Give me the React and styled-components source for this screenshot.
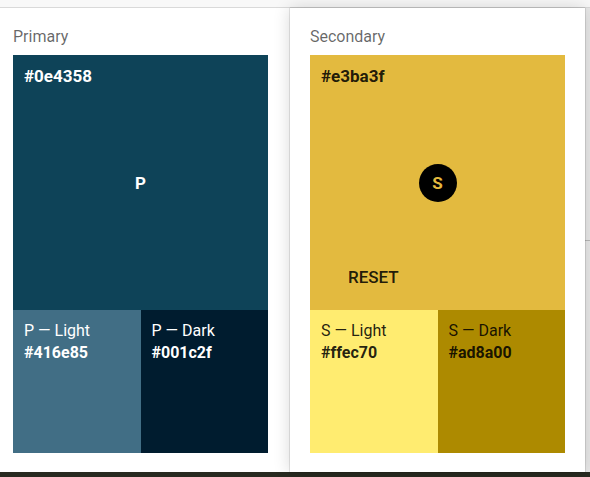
import React from 'react';
import styled, { createGlobalStyle } from 'styled-components';

const GlobalStyle = createGlobalStyle`
    html, body {
        margin: 0;
        padding: 0;
        background: #f5f5f5;
        font-family: Roboto, "Liberation Sans", sans-serif;
        overflow: hidden;
    }
    #root {
        height: 477px;
    }
`;

const Page = styled.main`
    display: flex;
    flex-direction: column;
    height: 477px;
    width: 590px;
    overflow: hidden;
`;

const TopStrip = styled.div`
    height: 7px;
    background: #f8f8f8;
    border-bottom: 1px solid #d9d9d9;
    flex-shrink: 0;
`;

const CardRow = styled.section`
    display: flex;
    flex: 1;
    min-height: 0;
`;

const Card = styled.article`
    position: relative;
    flex-shrink: 0;
    width: ${p => p.$width}px;
    margin-left: ${p => p.$offset || 0}px;
    padding: 17px 20px 0;
    box-sizing: border-box;
    background: white;
    z-index: ${p => (p.$raised ? 2 : 1)};
    box-shadow: ${p => p.$raised
        ? '0 0 1px rgba(0,0,0,.55), 0 0 16px rgba(0,0,0,.16)'
        : 'none'};
`;

const Gap = styled.div`
    width: 2px;
    flex-shrink: 0;
    background: white;
`;

const Peek = styled.div`
    flex: 1;
    background: #e9e9e9;
    padding-top: 232px;
    .edge {
        height: 1px;
        background: #b8b8b8;
    }
`;

const Label = styled.h2`
    margin: 0 0 7px;
    font-size: 16px;
    font-weight: 400;
    line-height: 23px;
    color: rgba(0, 0, 0, 0.6);
`;

const Palette = styled.div`
    width: 255px;
    display: flex;
    flex-direction: column;
`;

const Main = styled.div`
    display: grid;
    height: 255px;
    background: ${p => p.$bg};
    color: ${p => p.$fg};
    > * {
        grid-area: 1 / 1;
    }
`;

const Hex = styled.span`
    align-self: start;
    justify-self: start;
    padding: 10px 11px;
    font-size: 17px;
    font-weight: 700;
    line-height: 22px;
`;

const Letter = styled.span`
    align-self: center;
    justify-self: center;
    font-size: 17px;
    font-weight: 700;
    line-height: 20px;
`;

const Badge = styled.span`
    align-self: center;
    justify-self: center;
    display: flex;
    align-items: center;
    justify-content: center;
    width: 38px;
    height: 38px;
    border-radius: 50%;
    background: #000;
    color: ${p => p.$fg};
    font-size: 17px;
    font-weight: 700;
`;

const ResetButton = styled.button`
    align-self: end;
    justify-self: start;
    margin: 0 0 22px 27px;
    padding: 0 11px;
    border: 0;
    background: transparent;
    color: rgba(0, 0, 0, 0.87);
    font-family: inherit;
    font-size: 17px;
    font-weight: 500;
    line-height: 22px;
    text-transform: uppercase;
    cursor: pointer;
`;

const Variants = styled.div`
    display: flex;
    height: 143px;
`;

const Variant = styled.div`
    flex: 1;
    padding: 10px 11px;
    background: ${p => p.$bg};
    color: ${p => p.$fg};
    font-size: 16px;
    line-height: 22px;
    .name {
        display: block;
    }
    .hex {
        display: block;
        font-weight: 700;
    }
`;

const BottomBar = styled.div`
    height: 5px;
    flex-shrink: 0;
    background: #282a20;
`;

const SwatchCard = ({ title, main, light, dark, fg, initial, raised, width, offset }) => (
    <Card $raised={raised} $width={width} $offset={offset}>
        <Label>{title}</Label>
        <Palette>
            <Main $bg={main} $fg={fg}>
                <Hex>{main}</Hex>
                {raised ? (
                    <>
                        <Badge $fg={main}>{initial}</Badge>
                        <ResetButton>Reset</ResetButton>
                    </>
                ) : (
                    <Letter>{initial}</Letter>
                )}
            </Main>
            <Variants>
                <Variant $bg={light} $fg={fg}>
                    <span className="name">{initial} — Light</span>
                    <span className="hex">{light}</span>
                </Variant>
                <Variant $bg={dark} $fg={fg}>
                    <span className="name">{initial} — Dark</span>
                    <span className="hex">{dark}</span>
                </Variant>
            </Variants>
        </Palette>
    </Card>
);

const App = () => (
    <Page>
        <GlobalStyle />
        <TopStrip />
        <CardRow>
            <SwatchCard
                title="Primary"
                main="#0e4358"
                light="#416e85"
                dark="#001c2f"
                fg="#fff"
                initial="P"
                width={295}
                offset={-7}
            />
            <Gap />
            <SwatchCard
                title="Secondary"
                main="#e3ba3f"
                light="#ffec70"
                dark="#ad8a00"
                fg="rgba(0,0,0,.87)"
                initial="S"
                width={295}
                raised
            />
            <Peek>
                <div className="edge" />
            </Peek>
        </CardRow>
        <BottomBar />
    </Page>
);

export default App;
